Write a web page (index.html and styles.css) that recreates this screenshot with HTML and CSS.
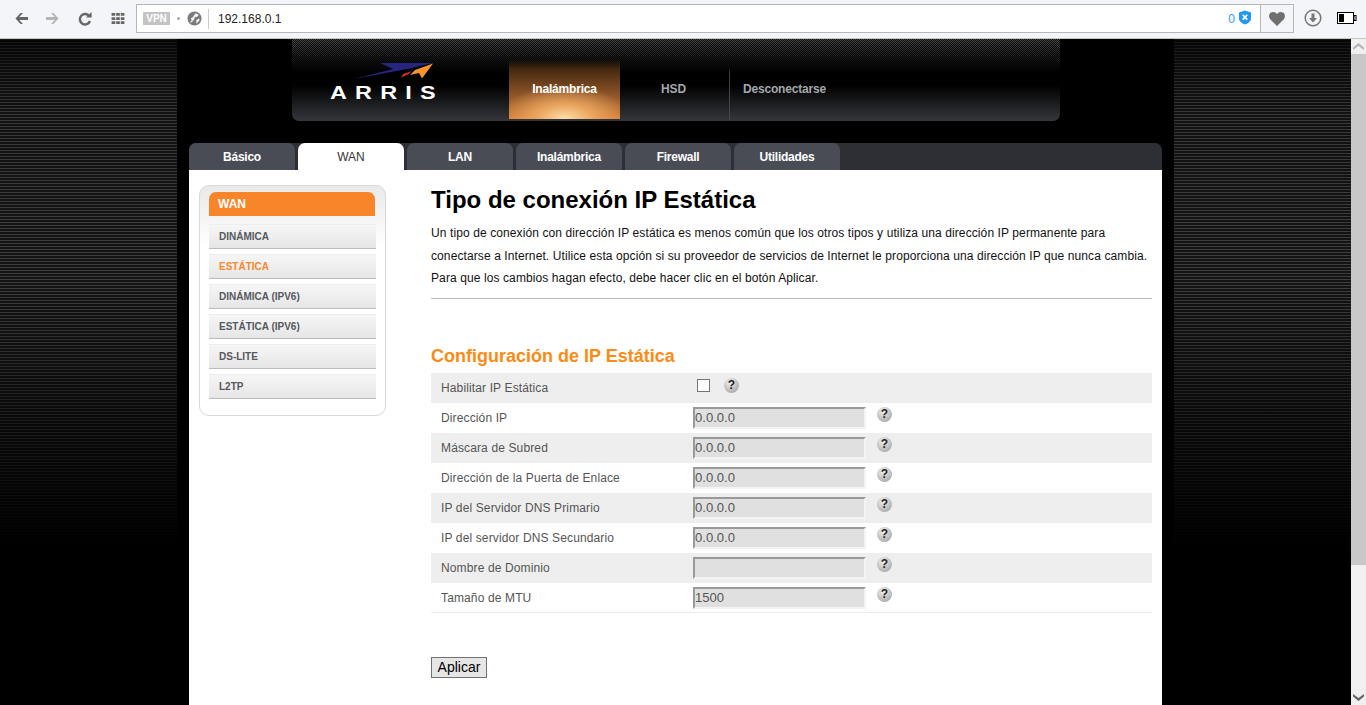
FILE: index.html
```html
<!DOCTYPE html>
<html lang="es">
<head>
<meta charset="utf-8">
<title>ARRIS - WAN</title>
<link rel="stylesheet" href="styles.css">
</head>
<body>
<div class="toolbar">
  <div class="nav-icons">
    <svg class="ic ic-back" viewBox="0 0 16 14"><path d="M7 1 1.5 7 7 13h2.6L5.6 8.5H15v-3H5.6L9.6 1z" fill="#666"/></svg>
    <svg class="ic ic-fwd" viewBox="0 0 16 14"><path d="M9 1 14.5 7 9 13H6.4l4-4.5H1v-3h9.4l-4-4.5z" fill="#b4b4b4"/></svg>
    <svg class="ic ic-reload" viewBox="0 0 14 14"><path d="M11.3 4.2A5.2 5.2 0 1 0 12 9" fill="none" stroke="#666" stroke-width="2.4"/><path d="M8 5.6h5.6V0z" fill="#666"/></svg>
    <svg class="ic ic-grid" viewBox="0 0 14 12"><path d="M0 0h4v3H0zM5 0h4v3H5zM10 0h4v3h-4zM0 4.500h4v3H0zM5 4.500h4v3H5zM10 4.500h4v3h-4zM0 9h4v3H0zM5 9h4v3H5zM10 9h4v3h-4z" fill="#666"/></svg>
  </div>
  <div class="urlbox">
    <div class="url-main">
      <span class="vpn">VPN</span>
      <span class="dot"></span>
      <svg class="globe" viewBox="0 0 16 16"><circle cx="8" cy="8" r="7.500" fill="#7b7b7b"/><path d="M9 2.500 12.500 4 11 6 8.500 6.500 7.500 9 5.500 11.500 3 13 5 9.500 4 8 6.500 6.500zM10 9.500l3.500-1.500-.5 2.500-3 3z" fill="#f4f5f8"/></svg>
      <span class="sep"></span>
      <span class="url">192.168.0.1</span>
      <span class="count">0</span>
      <svg class="shield" viewBox="0 0 13 15"><path d="M6.500 0 13 2v6.500c0 3-3 5.200-6.500 6.500C3 13.700 0 11.500 0 8.500V2z" fill="#2196f3"/><path d="M4 4.500 9 9.800M9 4.500 4 9.800" stroke="#fff" stroke-width="1.700"/></svg>
    </div>
    <div class="url-heart">
      <svg class="heart" viewBox="0 0 16 14"><path d="M8 14 1.200 7.200C-.6 5-.2 1.700 2 .6 4.200-.5 6.800 0 8 2.200 9.200 0 11.800-.5 14 .6c2.200 1.100 2.600 4.400.8 6.600z" fill="#6f6f6f"/></svg>
    </div>
  </div>
  <svg class="dl" viewBox="0 0 18 18"><circle cx="9" cy="9" r="7.800" fill="none" stroke="#777" stroke-width="1.500"/><path d="M7.500 4.500h3V9H13l-4 4.500L5 9h2.500z" fill="#777"/></svg>
  <svg class="batt" viewBox="0 0 20 12"><rect x=".5" y=".5" width="16" height="11" fill="#fff" stroke="#000"/><rect x="2" y="2" width="5" height="8" fill="#000"/><rect x="17" y="3.500" width="2" height="5" fill="none" stroke="#000"/></svg>
</div>

<div class="viewport">
  <div class="page">
    <div class="stripes"></div>
    <div class="center">
      <header class="head">
        <div class="logo">
          <svg class="swoosh" viewBox="0 0 84 20"><path d="M2 17 41 7 28 1h53L55 7z" fill="#26257f"/><path d="M81 1.500 63 8 58 13l9-2 3 5.500z" fill="#f7942d"/><path d="M60 9 51 12 49 15.500 56 12.500z" fill="#d42a2a"/></svg>
          <span class="word">ARRIS</span>
        </div>
        <nav class="topnav">
          <a class="top active">Inalámbrica</a>
          <a class="top hsd">HSD</a>
          <a class="top desc">Desconectarse</a>
        </nav>
      </header>

      <div class="tabs">
        <a class="tab">Básico</a>
        <a class="tab on">WAN</a>
        <a class="tab">LAN</a>
        <a class="tab">Inalámbrica</a>
        <a class="tab">Firewall</a>
        <a class="tab">Utilidades</a>
      </div>

      <div class="sheet">
        <aside class="side">
          <div class="side-title">WAN</div>
          <a class="side-item">DINÁMICA</a>
          <a class="side-item cur">ESTÁTICA</a>
          <a class="side-item">DINÁMICA (IPV6)</a>
          <a class="side-item">ESTÁTICA (IPV6)</a>
          <a class="side-item">DS-LITE</a>
          <a class="side-item">L2TP</a>
        </aside>
        <main class="main">
          <h1>Tipo de conexión IP Estática</h1>
          <p class="intro">Un tipo de conexión con dirección IP estática es menos común que los otros tipos y utiliza una dirección IP permanente para conectarse a Internet. Utilice esta opción si su proveedor de servicios de Internet le proporciona una dirección IP que nunca cambia. Para que los cambios hagan efecto, debe hacer clic en el botón Aplicar.</p>
          <hr class="rule">
          <h2>Configuración de IP Estática</h2>
          <div class="form">
            <div class="row"><label>Habilitar IP Estática</label><span class="field chk"><input class="check" type="checkbox"><span class="help">?</span></span></div>
            <div class="row"><label>Dirección IP</label><span class="field"><input class="ip" type="text" value="0.0.0.0"><span class="help">?</span></span></div>
            <div class="row"><label>Máscara de Subred</label><span class="field"><input class="ip" type="text" value="0.0.0.0"><span class="help">?</span></span></div>
            <div class="row"><label>Dirección de la Puerta de Enlace</label><span class="field"><input class="ip" type="text" value="0.0.0.0"><span class="help">?</span></span></div>
            <div class="row"><label>IP del Servidor DNS Primario</label><span class="field"><input class="ip" type="text" value="0.0.0.0"><span class="help">?</span></span></div>
            <div class="row"><label>IP del servidor DNS Secundario</label><span class="field"><input class="ip" type="text" value="0.0.0.0"><span class="help">?</span></span></div>
            <div class="row"><label>Nombre de Dominio</label><span class="field"><input class="ip" type="text" value=""><span class="help">?</span></span></div>
            <div class="row"><label>Tamaño de MTU</label><span class="field"><input class="ip" type="text" value="1500"><span class="help">?</span></span></div>
          </div>
          <button class="apply" type="button">Aplicar</button>
        </main>
      </div>
    </div>
    <div class="stripes"></div>
  </div>
  <div class="scrollbar">
    <div class="sb-btn"><svg viewBox="0 0 11 7"><path d="M5.500 0 11 4.500V7L5.500 3 0 7V4.500z" fill="#b5b5b5"/></svg></div>
    <div class="sb-thumb"></div>
    <div class="sb-track"></div>
    <div class="sb-btn sb-down"><svg viewBox="0 0 11 7"><path d="M5.500 7 11 2.500V0L5.500 4 0 0v2.500z" fill="#666"/></svg></div>
  </div>
</div>
</body>
</html>
```

FILE: styles.css
```css
* { box-sizing: border-box; }
html, body { height: 100%; }
body {
  margin: 0;
  height: 705px;
  overflow: hidden;
  display: flex;
  flex-direction: column;
  font-family: "Liberation Sans", Arial, sans-serif;
  background: #000;
}

/* browser toolbar */
.toolbar {
  height: 39px;
  flex: none;
  display: flex;
  align-items: flex-start;
  background: #f4f5f8;
  border-bottom: 1px solid #c4c4c4;
}
.nav-icons {
  width: 136px;
  height: 38px;
  flex: none;
  display: flex;
  align-items: center;
  padding: 0 0 1px 14px;
}
.ic { display: block; flex: none; }
.ic-back { width: 15px; height: 13px; }
.ic-fwd { width: 15px; height: 13px; margin-left: 16px; }
.ic-reload { width: 14px; height: 14px; margin-left: 18px; }
.ic-grid { width: 14px; height: 11px; margin-left: 19px; }
.urlbox {
  width: 1158px;
  height: 29px;
  margin-top: 4px;
  flex: none;
  display: flex;
  background: #fff;
  border: 1px solid #b5b7ba;
}
.url-main {
  flex: 1;
  display: flex;
  align-items: center;
  padding: 0 9px 0 6px;
}
.vpn {
  width: 27px;
  height: 13px;
  flex: none;
  background: #c4c4c4;
  color: #fff;
  font-size: 10px;
  font-weight: bold;
  line-height: 13px;
  text-align: center;
}
.dot {
  width: 3px;
  height: 3px;
  margin-left: 7px;
  flex: none;
  background: #a8a8a8;
  border-radius: 50%;
}
.globe { width: 15px; height: 15px; margin-left: 7px; flex: none; }
.sep { width: 1px; height: 20px; margin-left: 6px; background: #ccc; flex: none; }
.url {
  margin-left: 9px;
  flex: 1;
  font-size: 12px;
  color: #222;
}
.count { font-size: 12px; color: #2d9bf0; margin-right: 4px; }
.shield { width: 12px; height: 15px; flex: none; margin-top: -2px; }
.url-heart {
  width: 33px;
  flex: none;
  display: flex;
  align-items: center;
  justify-content: center;
  background: #f4f5f8;
  border-left: 1px solid #b5b7ba;
}
.heart { width: 16px; height: 14px; }
.dl { width: 18px; height: 18px; margin: 9px 0 0 10px; flex: none; }
.batt { width: 20px; height: 12px; margin: 12px 0 0 15px; flex: none; }

/* page */
.viewport { flex: 1; min-height: 0; display: flex; }
.page { flex: 1; min-width: 0; display: flex; background: #000; overflow: hidden; }
.stripes {
  width: 177px;
  flex: none;
  background:
    linear-gradient(rgba(0,0,0,.7) 0, rgba(0,0,0,.2) 70px, rgba(0,0,0,.1) 240px, #000 510px),
    repeating-linear-gradient(#454545 0 1px, #161616 1px 3px);
}
.center { flex: 1; min-width: 0; padding: 0 12px; display: flex; flex-direction: column; }

/* header */
.head {
  width: 768px;
  height: 82px;
  flex: none;
  margin: 0 0 22px 103px;
  display: flex;
  border-radius: 0 0 7px 7px;
  background:
    linear-gradient(rgba(52,55,60,0) 46px, #34373c 82px),
    linear-gradient(rgba(0,0,0,.3), rgba(0,0,0,.75) 18px, #000 34px),
    conic-gradient(#6c6c6c 25%, #111 0 50%, #6c6c6c 0 75%, #111 0) 0 0 / 2px 2px;
}
.logo { width: 217px; flex: none; position: relative; }
.swoosh { position: absolute; left: 60px; top: 23px; width: 84px; height: 20px; }
.word {
  position: absolute;
  left: 38px;
  top: 42px;
  font-size: 18px;
  line-height: 24px;
  font-weight: bold;
  letter-spacing: 6.300px;
  color: #fff;
  transform: scaleX(1.3);
  transform-origin: 0 0;
}
.topnav { display: flex; align-items: stretch; height: 80px; }
.top {
  display: block;
  font-size: 12px;
  font-weight: bold;
  letter-spacing: -.18px;
  line-height: 100px;
  color: #a4a8ae;
}
.active {
  width: 111px;
  text-align: center;
  color: #fff;
  background:
    radial-gradient(ellipse 66px 34px at 50% 100%, #fde0ac 0, rgba(240,172,100,.9) 42%, rgba(224,130,60,0) 100%) no-repeat,
    linear-gradient(rgba(60,34,14,0) 20px, #44280f 30px, #94582a 58px, #d47c33 80px),
    linear-gradient(90deg, #6e6052 1px, transparent 1px, transparent 110px, #7c6e60 110px) 0 100% / 100% 52px no-repeat;
}
.hsd {
  width: 110px;
  text-align: center;
  padding-right: 2px;
  border-right: 1px solid;
  border-image: linear-gradient(transparent 28px, #3c3e42 34px, #45474c 100%) 1;
}
.desc { padding-left: 13px; }

/* tabs */
.tabs {
  height: 27px;
  flex: none;
  display: flex;
  gap: 3px;
  background: #2d2f34;
  border-radius: 7px 7px 0 0;
}
.tab {
  width: 106px;
  flex: none;
  background: #494c55;
  border-radius: 7px 7px 0 0;
  color: #fff;
  font-size: 12px;
  font-weight: bold;
  letter-spacing: -.25px;
  line-height: 29px;
  text-align: center;
}
.tab.on { background: #fff; color: #333; font-weight: normal; letter-spacing: 0; }

/* sheet */
.sheet { flex: 1; min-height: 0; background: #fff; display: flex; align-items: flex-start; padding: 15px 10px 0; }
.side {
  width: 187px;
  height: 231px;
  flex: none;
  padding: 6px 10px 0 9px;
  border: 1px solid #d8d8d8;
  border-radius: 10px;
  background: linear-gradient(#e9e9e9 0, #fff 60px);
}
.side-title {
  height: 24px;
  margin-bottom: 8px;
  padding-left: 9px;
  border-radius: 7px 7px 0 0;
  background: #f8852a;
  color: #fff;
  font-size: 12px;
  font-weight: bold;
  line-height: 24px;
}
.side-item {
  display: block;
  width: 167px;
  height: 25px;
  margin-bottom: 5px;
  padding-left: 10px;
  border-bottom: 1px solid #bdbdbd;
  border-top: 1px solid #ededed;
  background: linear-gradient(#f6f6f6, #e6e6e6);
  color: #56585e;
  font-size: 10px;
  font-weight: bold;
  line-height: 23px;
}
.side-item.cur { color: #f8892c; }

/* main */
.main { flex: 1; min-width: 0; margin-left: 45px; }
h1 { margin: 1px 0 0; font-size: 24px; line-height: 28px; color: #000; }
.intro { margin: 8px 0 0; font-size: 12px; line-height: 22.500px; letter-spacing: .1px; color: #111; }
.rule { margin: 8px 0 0; border: 0; border-top: 1px solid #bbb; }
h2 { margin: 46px 0 0; font-size: 18px; line-height: 22px; color: #fb8b12; }
.form { margin-top: 6px; }
.row { height: 30px; display: flex; }
.row:nth-child(odd) { background: #eee; }
.row:last-child { border-bottom: 1px solid #ececec; }
.row label { width: 262px; flex: none; padding-left: 10px; font-size: 12px; letter-spacing: .13px; line-height: 30px; color: #555; }
.field { display: flex; align-items: flex-start; padding-top: 4px; }
.ip {
  width: 173px;
  height: 22px;
  margin: 0;
  padding: 0;
  border: 2px solid;
  border-color: #999 #f4f4f4 #f4f4f4 #999;
  background: #e0e0e0;
  color: #555;
  font-family: "Liberation Sans", Arial, sans-serif;
  font-size: 13.100px;
}
.help {
  width: 15px;
  height: 15px;
  margin: 0 0 0 11px;
  flex: none;
  border-radius: 50%;
  background: radial-gradient(circle at 40% 30%, #f0f0f0, #bbb 60%, #999);
  color: #222;
  font-size: 12px;
  font-weight: bold;
  line-height: 15px;
  text-align: center;
}
.chk { padding: 5px 0 0 4px; }
.check { width: 13px; height: 13px; margin: 1px 0 0; appearance: none; background: #fff; border: 1px solid #767676; }
.chk .help { margin-left: 14px; }
.apply {
  display: block;
  width: 56px;
  height: 21px;
  margin-top: 44px;
  padding: 0;
  border: 1px solid #707070;
  background: #e6e6e6;
  color: #000;
  font-family: "Liberation Sans", Arial, sans-serif;
  font-size: 14px;
}

/* scrollbar */
.scrollbar { width: 15px; flex: none; display: flex; flex-direction: column; background: #f0f0f0; }
.sb-btn { height: 15px; flex: none; display: flex; align-items: center; justify-content: center; }
.sb-btn svg { width: 11px; height: 7px; }
.sb-thumb { height: 511px; flex: none; background: #c8c8c8; }
.sb-track { flex: 1; }
```
